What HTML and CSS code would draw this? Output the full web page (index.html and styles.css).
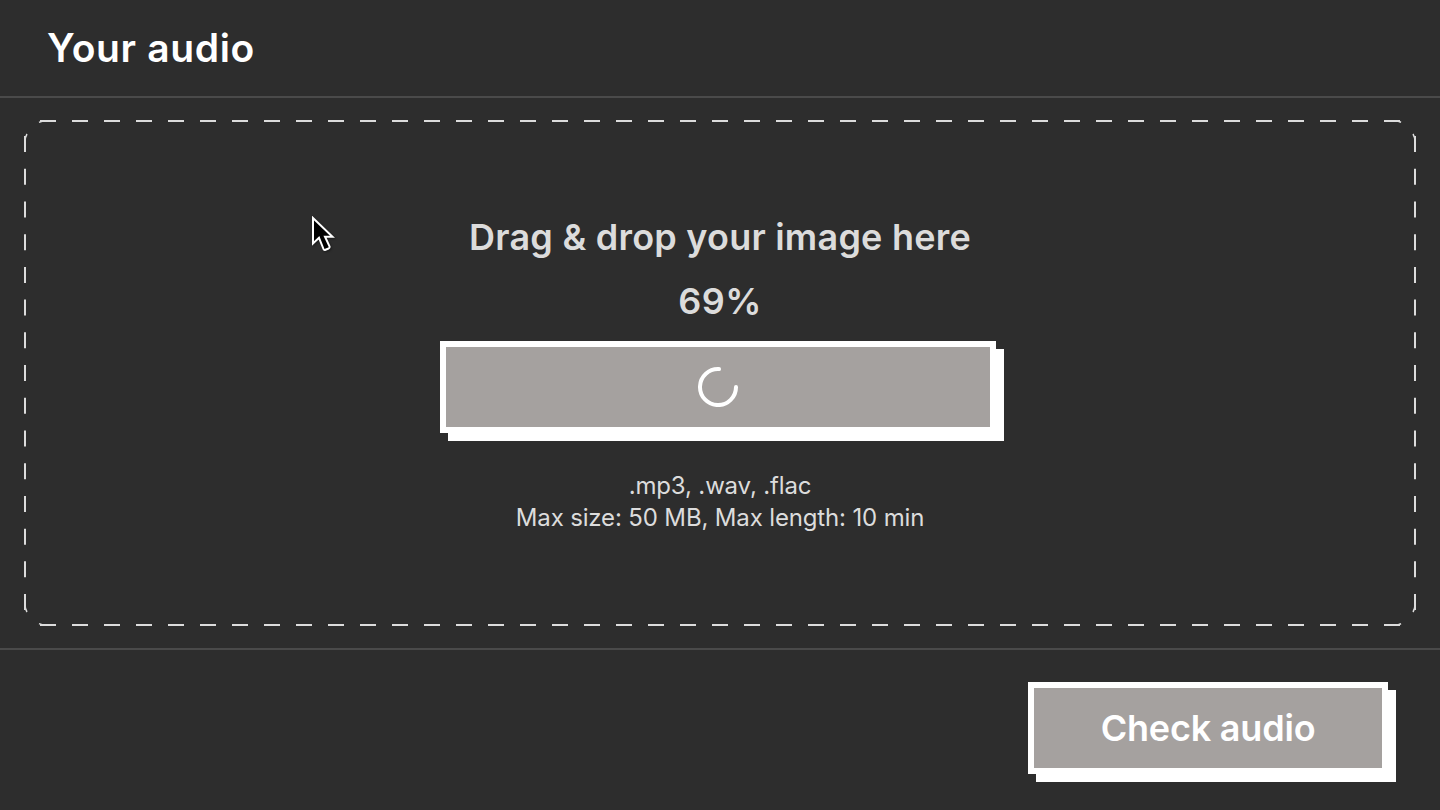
FILE: index.html
```html
<!DOCTYPE html>
<html lang="en">

<head>
  <meta charset="UTF-8" />
  <title>Your audio</title>
  <link rel="stylesheet" href="styles.css">
</head>

<body>
  <!-- Header -->
  <header class="page-header">
    <h1>Your audio</h1>
  </header>

  <!-- Upload area -->
  <main class="page-main">
    <section class="dropzone">
      <svg class="dropzone-border" viewBox="0 0 1392 506" aria-hidden="true">
        <path class="dash-h" d="M16 1H1376" />
        <path class="dash-h" d="M16 505H1376" />
        <path class="dash-v" d="M1 16V490" />
        <path class="dash-v" d="M1391 16V490" />
        <path class="dash-corner" d="M15 2.4Q18 1 22 1M1 22Q1 17 3 14M1 484Q1 489 3 492M15 503.6Q18 505 22 505M1370 1Q1375 1 1377 2.4M1391 22Q1391 17 1389 14M1391 484Q1391 489 1389 492M1370 505Q1375 505 1377 503.6" />
      </svg>
      <p class="drop-title">Drag &amp; drop your image here</p>
      <p class="drop-percent">69%</p>
      <button class="btn btn-progress" type="button">
        <svg class="spinner" viewBox="0 0 40 40" aria-hidden="true">
          <path d="M21 2.1A18 18 0 1 0 38 20" />
        </svg>
      </button>
      <p class="drop-hint">.mp3, .wav, .flac<br>Max size: 50 MB, Max length: 10 min</p>
    </section>
  </main>

  <!-- Footer -->
  <footer class="page-footer">
    <button class="btn btn-check" type="button">Check audio</button>
  </footer>

  <!-- Mouse pointer -->
  <svg class="pointer" viewBox="0 0 26 38" aria-hidden="true">
    <path d="M2 2V27.5L8 21.8L12.5 33Q13 34.3 14.5 33.7L17.5 32.5Q19 31.8 18.5 30.3L14 20.8H21.5Z" />
  </svg>
</body>

</html>
```

FILE: styles.css
```css
/* --- Base --- */
:root {
  --bg: #2d2d2d;
  --line: #4a4a4a;
  --muted: #dcdcdc;
  --grey: #a5a19f;
}

* {
  box-sizing: border-box;
}

body {
  margin: 0;
  height: 810px;
  overflow: hidden;
  position: relative;
  background: var(--bg);
  color: #fff;
  font-family: Inter, "Noto Sans", sans-serif;
}

p,
h1 {
  margin: 0;
}

/* --- Header --- */
.page-header {
  height: 98px;
  padding: 0 47px;
  display: flex;
  align-items: center;
  border-bottom: 2px solid var(--line);
}

h1 {
  font-size: 39px;
  font-weight: 600;
  letter-spacing: 0.65px;
  line-height: 48px;
}

/* --- Dropzone --- */
.page-main {
  padding: 22px 24px;
  height: 552px;
  border-bottom: 2px solid var(--line);
}

.dropzone {
  position: relative;
  height: 506px;
  display: flex;
  flex-direction: column;
  align-items: center;
  padding-top: 93px;
  color: var(--muted);
}

.dropzone-border {
  position: absolute;
  top: 0;
  left: 0;
  width: 1392px;
  height: 506px;
  fill: none;
  stroke: var(--muted);
  stroke-width: 2;
}

.dash-h {
  stroke-dasharray: 16 16;
}

.dash-v {
  stroke-dasharray: 16 16.72;
}

.dash-corner {
  stroke-width: 1.5;
}

.drop-title {
  font-size: 36px;
  font-weight: 600;
  letter-spacing: 0.22px;
  line-height: 48px;
}

.drop-percent {
  margin-top: 16px;
  font-size: 36px;
  font-weight: 600;
  letter-spacing: 0.5px;
  line-height: 48px;
}

.drop-hint {
  margin-top: 37px;
  font-size: 24px;
  letter-spacing: -0.15px;
  line-height: 32px;
  text-align: center;
}

/* --- Buttons --- */
.btn {
  display: flex;
  align-items: center;
  justify-content: center;
  height: 92px;
  padding: 0;
  border: 6px solid #fff;
  border-radius: 0;
  background: var(--grey);
  box-shadow: 8px 8px 0 #fff;
  color: #fff;
  font-family: inherit;
}

.btn-progress {
  width: 556px;
  margin-top: 16px;
  margin-right: 4px;
}

.spinner {
  width: 40px;
  height: 40px;
  fill: none;
  stroke: #fff;
  stroke-width: 4;
  stroke-linecap: round;
}

.btn-check {
  width: 360px;
  font-size: 36px;
  font-weight: 600;
  letter-spacing: -0.2px;
}

/* --- Footer --- */
.page-footer {
  display: flex;
  justify-content: flex-end;
  padding: 32px 52px 0 0;
}

/* --- Pointer --- */
.pointer {
  position: absolute;
  top: 216px;
  left: 311px;
  width: 26px;
  height: 38px;
  fill: #000;
  stroke: #fff;
  stroke-width: 2;
  filter: drop-shadow(1px 1px 1px rgba(0, 0, 0, 0.4));
}
```
